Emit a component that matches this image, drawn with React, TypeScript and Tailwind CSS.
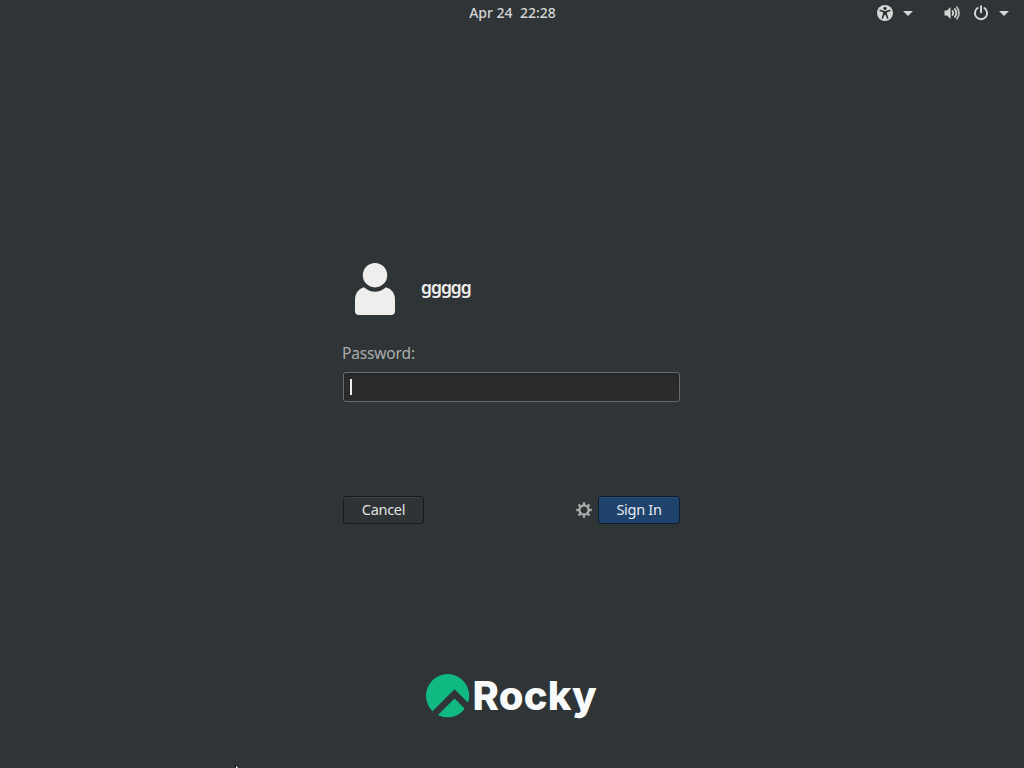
import React, { useState } from "react";

const Caret = () => (
  <svg className="w-[10px] h-[5px]" viewBox="0 0 10 5" fill="#d3d7d5">
    <path d="M0 0h10L5 5z" />
  </svg>
);

const AccessIcon = () => (
  <svg className="w-4 h-4" viewBox="0 0 16 16">
    <circle cx="8" cy="8" r="8" fill="#d3d7d5" />
    <circle cx="8" cy="3.4" r="1.6" fill="#2e3436" />
    <path
      d="M3.200 5.500l3.600 1.200v2.300L5.400 13M12.800 5.500L9.200 6.700v2.300l1.400 4"
      fill="none"
      stroke="#2e3436"
      strokeWidth="1.6"
      strokeLinecap="round"
    />
    <path d="M6 6h4v3.400L8 10.200 6 9.400z" fill="#2e3436" />
  </svg>
);

const VolumeIcon = () => (
  <svg className="w-4 h-4" viewBox="0 0 16 16" fill="none">
    <path d="M.5 5.500h2.500L6.500 2v12L3 10.500H.5z" fill="#d3d7d5" />
    <g stroke="#d3d7d5" strokeWidth="1.8" strokeLinecap="round">
      <path d="M8.500 6q1.500 2 0 4" />
      <path d="M10.900 4q2.800 4 0 8" />
      <path d="M13 2.200q3.900 5.800 0 11.600" opacity="0.85" />
    </g>
  </svg>
);

const PowerIcon = () => (
  <svg className="w-4 h-4" viewBox="0 0 16 16" fill="none" stroke="#d3d7d5" strokeWidth="2" strokeLinecap="round">
    <path d="M8 1.300v6" />
    <path d="M4.600 3a6.100 6.100 0 1 0 6.800 0" />
  </svg>
);

const UserIcon = () => (
  <svg className="w-[40px] h-[53px]" viewBox="0 0 40 53" fill="#eeeeec">
    <circle cx="20" cy="12.200" r="12.200" />
    <path d="M9 24.200q11 9 22 0q9 2.800 9 12.800v11q0 4-4 4H4q-4 0-4-4V37q0-10 9-12.800z" />
  </svg>
);

const GearIcon = () => {
  const teeth = [0, 45, 90, 135, 180, 225, 270, 315];
  return (
    <svg className="w-4 h-4" viewBox="0 0 16 16" fill="none" stroke="#a9acaa">
      <circle cx="8" cy="8" r="4.600" strokeWidth="2.400" />
      {teeth.map((item) => (
        <path key={item} d="M8 .2v2.800" strokeWidth="2.300" transform={`rotate(${item} 8 8)`} />
      ))}
    </svg>
  );
};

const RockyLogo = () => (
  <div className="flex h-[48px] items-start justify-center">
    <svg className="w-[44px] h-[44px] shrink-0" viewBox="0 0 44 44">
      <clipPath id="disc">
        <circle cx="21.600" cy="21.700" r="21.600" />
      </clipPath>
      <g clipPath="url(#disc)" fill="#10b981">
        <path d="M0 0h44v30.500L28.500 15.200 4 39.700H0z" />
        <path d="M28.500 24.500L38 34V44H9z" />
      </g>
    </svg>
    <span className="ml-[3px] mt-[2px] w-[126px] whitespace-nowrap font-['Inter',sans-serif] text-[40px] leading-[40px] font-extrabold tracking-[0.2px] text-[#f8fafa]">
      Rocky
    </span>
  </div>
);

function App() {
  const [password, setPassword] = useState("");
  return (
    <div className="relative w-full h-screen overflow-hidden flex flex-col items-center bg-[#2f3436] font-['Noto_Sans',sans-serif]">
      <div className="w-full h-[26px] grid grid-cols-3 items-center text-[#d3d7d5]">
        <div />
        <div className="pl-px text-center text-[14px] leading-[26px] font-medium whitespace-pre">Apr 24  22:28</div>
        <div className="flex items-center justify-end pr-[15px]">
          <AccessIcon />
          <div className="ml-[10px] mr-[31px]">
            <Caret />
          </div>
          <VolumeIcon />
          <div className="ml-[13px] mr-[10px]">
            <PowerIcon />
          </div>
          <Caret />
        </div>
      </div>

      <div className="w-[337px] mt-[237px] mr-px">
        <div className="flex items-start pl-3">
          <UserIcon />
          <div className="ml-[26px] mt-[12px] text-[17.500px] leading-6 font-semibold tracking-[-1px] text-[#eeeeec]">ggggg</div>
        </div>
        <div className="mt-[26px] -ml-px h-[22px] text-[15.500px] leading-[23px] tracking-[-0.150px] text-[#a9adab]">Password:</div>
        <div className="mt-[8px] flex h-[30px] items-center rounded-[3px] border border-[#686c6b] bg-[#2b2b2c] pl-[6px] shadow-[inset_0_2px_2px_#242526]">
          <div className="w-[2px] h-4 shrink-0 bg-[#eeeeec]" />
          <input
            type="password"
            className="w-full bg-transparent text-white outline-none"
            value={password}
            onChange={(e) => setPassword(e.target.value)}
          />
        </div>
        <div className="mt-[94px] flex h-7 items-center justify-between text-[14.500px] tracking-[-0.300px]">
          <button className="w-[81px] h-7 rounded-[3px] border border-[#161a1b] bg-[#2e3335] text-[#e1e3e2] shadow-[inset_0_1px_#3b4042]">
            Cancel
          </button>
          <div className="flex items-center gap-[6px]">
            <GearIcon />
            <button className="w-[82px] h-7 rounded-[3px] border border-[#101c2b] bg-[#20436d] text-[#e6eaef] shadow-[inset_0_1px_#294d7b]">
              Sign In
            </button>
          </div>
        </div>
      </div>

      <div className="mt-[150px]">
        <RockyLogo />
      </div>

      {/* pointer tip resting on the bottom edge */}
      <svg className="absolute left-[235px] bottom-0 w-[4px] h-[3px]" viewBox="0 0 4 3">
        <path d="M0 0h1l3 3H0z" fill="#121414" />
        <path d="M1 .8L3.200 3H1z" fill="#ffffff" />
      </svg>
    </div>
  );
}

export default App;
